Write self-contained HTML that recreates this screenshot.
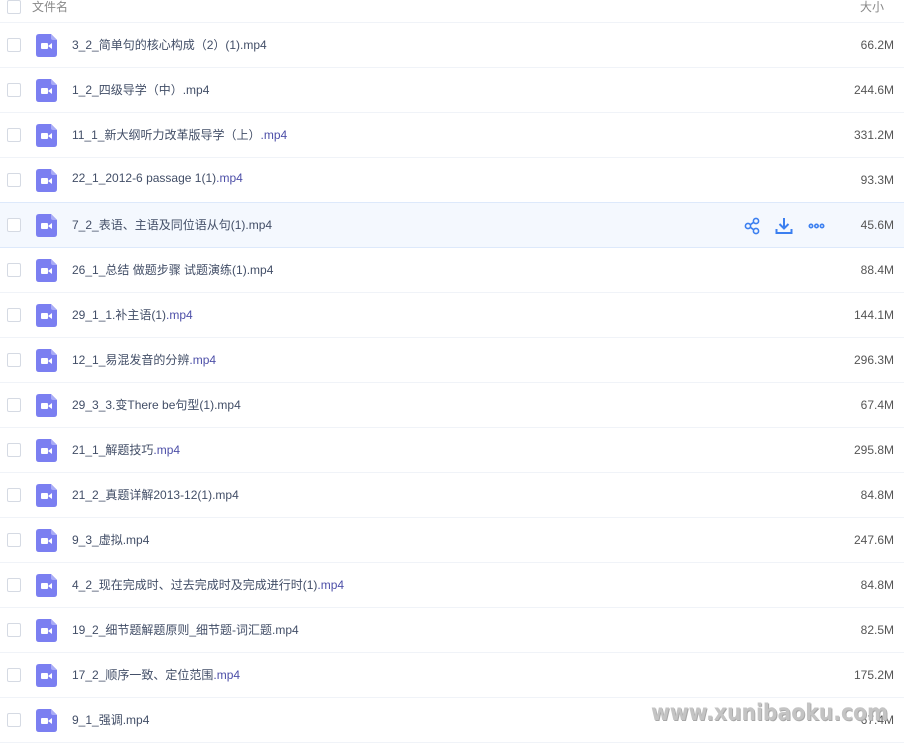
<!DOCTYPE html><html><head><meta charset="utf-8"><style>
body{margin:0;width:904px;height:728px;overflow:hidden;background:#fff;font-family:"Liberation Sans","Noto Sans CJK SC",sans-serif;font-size:12px;color:#424e67}
.hd{position:absolute;top:-8px;left:0;width:904px;height:30px;border-bottom:1px solid #f0f3f8}
.row{position:absolute;left:0;width:904px;height:44px;border-bottom:1px solid #f0f3f8}
.cb{position:absolute;left:7px;top:15px;width:12px;height:12px;border:1px solid #d5dae3;border-radius:2px;background:#fff}
.ic{position:absolute;left:36px;top:11px;width:21px;height:23px}
.nm{position:absolute;left:72px;top:13px;white-space:nowrap}
.sz{position:absolute;right:10px;top:15px;color:#555}
.hv{background:#f4f8fe;border-top:1px solid #dde9fb;border-bottom:1px solid #dde9fb}
.p{color:#4d4fa8}
</style></head><body>
<div class="hd"><div class="cb" style="top:8px"></div><span style="position:absolute;left:32px;top:6px;color:#888">文件名</span><span style="position:absolute;right:20px;top:6px;color:#888">大小</span></div>
<div id="c"></div>
<script>
var d=[["3_2_简单句的核心构成（2）(1).mp4","66.2M"],["1_2_四级导学（中）.mp4","244.6M"],["11_1_新大纲听力改革版导学（上）<span class=p>.mp4</span>","331.2M"],["22_1_2012-6 passage 1(1)<span class=p>.mp4</span>","93.3M"],["7_2_表语、主语及同位语从句(1).mp4","45.6M"],["26_1_总结 做题步骤 试题演练(1).mp4","88.4M"],["29_1_1.补主语(1)<span class=p>.mp4</span>","144.1M"],["12_1_易混发音的分辨<span class=p>.mp4</span>","296.3M"],["29_3_3.变There be句型(1).mp4","67.4M"],["21_1_解题技巧<span class=p>.mp4</span>","295.8M"],["21_2_真题详解2013-12(1).mp4","84.8M"],["9_3_虚拟.mp4","247.6M"],["4_2_现在完成时、过去完成时及完成进行时(1)<span class=p>.mp4</span>","84.8M"],["19_2_细节题解题原则_细节题-词汇题.mp4","82.5M"],["17_2_顺序一致、定位范围<span class=p>.mp4</span>","175.2M"],["9_1_强调.mp4","67.4M"]];
var ic='<svg class="ic" viewBox="0 0 21 23"><path d="M3 0H15L21 6V20Q21 23 18 23H3Q0 23 0 20V3Q0 0 3 0Z" fill="#7b7ff1"/><path d="M15 0V4Q15 6 17 6H21Z" fill="#a9acf6"/><rect x="5" y="9" width="7" height="6" rx="1" fill="#fff"/><path d="M12 12L16 9V15Z" fill="#fff"/></svg>';
var h='';d.forEach(function(r,i){var t=23+45*i;var hv=i==4;
h+='<div class="row'+(hv?' hv':'')+'" style="top:'+(hv?t-1:t)+'px"><div class="cb"></div>'+ic+'<div class="nm">'+r[0]+'</div><div class="sz">'+r[1]+'</div>'+(hv?'<svg style="position:absolute;left:744px;top:14px" width="90" height="18" viewBox="0 0 90 18" fill="none" stroke="#3b7ff0" stroke-width="1.6"><circle cx="4" cy="9" r="2.6"/><circle cx="12" cy="4" r="2.6"/><circle cx="12" cy="14" r="2.6"/><path d="M6.3 7.7L9.7 5.3M6.3 10.3L9.7 12.7"/><path d="M40 1V11M35.5 7L40 11.5L44.5 7M32.5 12V16H47.5V12" stroke-width="2"/><circle cx="67" cy="9" r="1.7"/><circle cx="72.5" cy="9" r="1.7"/><circle cx="78" cy="9" r="1.7"/></svg>':'')+'</div>';});
document.getElementById('c').innerHTML=h;
</script>
<div style="position:absolute;left:651px;top:700px;font:900 23px 'DejaVu Sans','Liberation Sans',sans-serif;color:#c4c4c4;text-shadow:1px 1px 0 #a8a8a8;transform:scaleX(0.885);transform-origin:left">www.xunibaoku.com</div>
</body></html>
